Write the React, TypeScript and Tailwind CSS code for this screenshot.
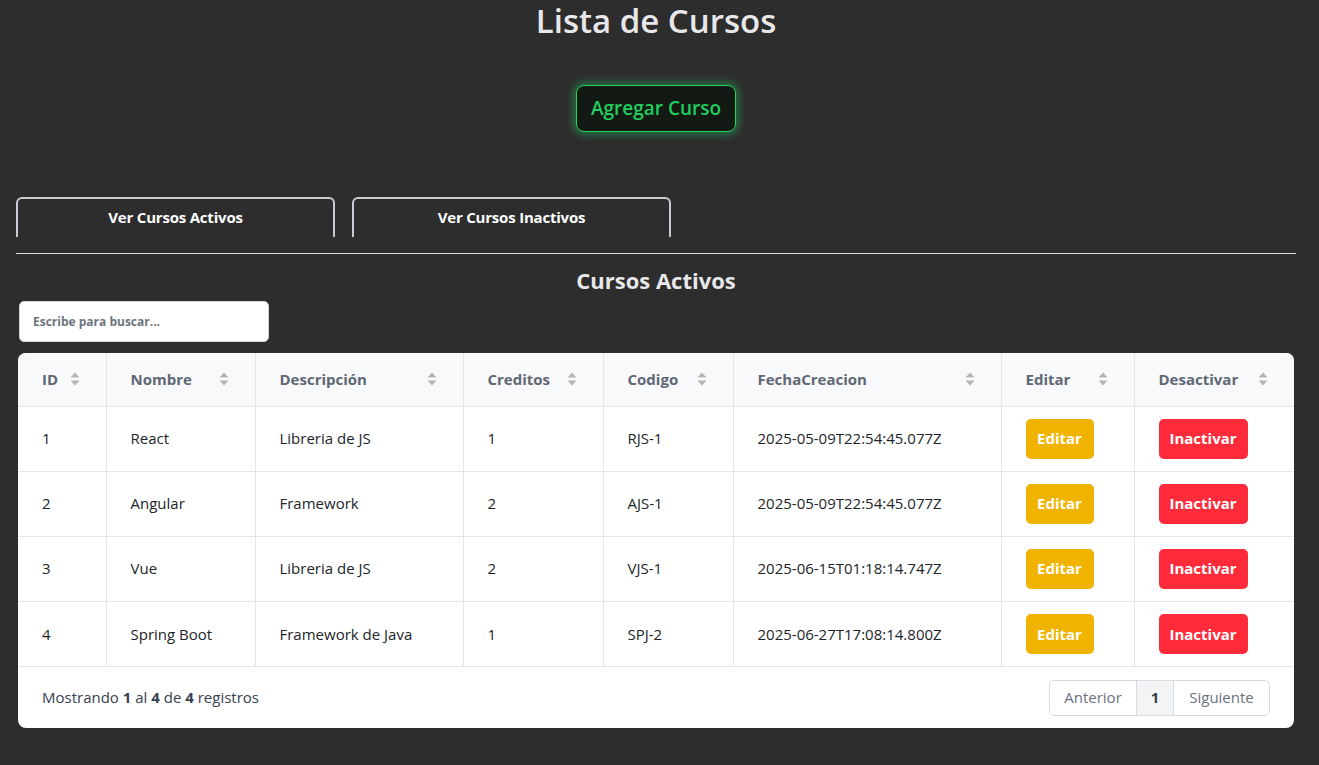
import React from 'react';

const cursos = [
  { id: 1, nombre: 'React', descripcion: 'Libreria de JS', creditos: 1, codigo: 'RJS-1', fecha: '2025-05-09T22:54:45.077Z' },
  { id: 2, nombre: 'Angular', descripcion: 'Framework', creditos: 2, codigo: 'AJS-1', fecha: '2025-05-09T22:54:45.077Z' },
  { id: 3, nombre: 'Vue', descripcion: 'Libreria de JS', creditos: 2, codigo: 'VJS-1', fecha: '2025-06-15T01:18:14.747Z' },
  { id: 4, nombre: 'Spring Boot', descripcion: 'Framework de Java', creditos: 1, codigo: 'SPJ-2', fecha: '2025-06-27T17:08:14.800Z' },
];

const columns = [
  { label: 'ID', width: 88 },
  { label: 'Nombre', width: 149 },
  { label: 'Descripción', width: 208 },
  { label: 'Creditos', width: 140 },
  { label: 'Codigo', width: 130 },
  { label: 'FechaCreacion', width: 268 },
  { label: 'Editar', width: 133 },
  { label: 'Desactivar', width: 160 },
];

function SortIcon() {
  return (
    <svg width="10" height="16" viewBox="0 0 10 16" className="shrink-0">
      <path d="M5 1.5 L9.5 6.5 H0.5 Z" fill="#b5b5b5" />
      <path d="M5 14.5 L9.5 9.5 H0.5 Z" fill="#b5b5b5" />
    </svg>
  );
}

export default function App() {
  const [tab, setTab] = React.useState('activos');

  return (
    <div className="min-h-screen bg-[#2d2d2d] pl-4 pr-[23px] pb-9 pt-[2px]" style={{ fontFamily: '"Open Sans", "Noto Sans", sans-serif' }}>
      <h1 className="text-center text-[33px] font-semibold leading-[38px] text-[#e8e8ea]">Lista de Cursos</h1>

      <div className="mt-[45px] flex justify-center">
        <button className="h-[47px] w-[160px] rounded-[8px] border border-[#22d35a] bg-[#131a13] text-[19px] font-semibold text-[#1fce5e] shadow-[0_0_10px_2px_rgba(34,197,94,0.55)]">
          Agregar Curso
        </button>
      </div>

      <div className="mt-[65px] flex gap-[17px]">
        <button
          onClick={() => setTab('activos')}
          className="h-[40px] w-[319px] rounded-t-[6px] border-2 border-b-0 border-[#c8ccd2] pb-[2px] text-[15px] font-bold tracking-[-0.2px] text-white"
        >
          Ver Cursos Activos
        </button>
        <button
          onClick={() => setTab('inactivos')}
          className="h-[40px] w-[319px] rounded-t-[6px] border-2 border-b-0 border-[#c8ccd2] pb-[2px] text-[15px] font-bold tracking-[-0.2px] text-white"
        >
          Ver Cursos Inactivos
        </button>
      </div>
      <div className="mt-[16px] h-px w-full bg-[#d9d9d9]" />

      <h2 className="mt-[12px] text-center text-[22px] font-bold leading-[28px] text-[#e8e8ea]">
        {tab === 'activos' ? 'Cursos Activos' : 'Cursos Inactivos'}
      </h2>

      <div className="ml-[3px] mt-[7px]">
        <input
          placeholder="Escribe para buscar..."
          className="h-[41px] w-[250px] rounded-[5px] border border-[#d0d4da] bg-white px-[13px] text-[12px] font-bold text-[#333] outline-none placeholder:text-[#6c757d]"
        />
      </div>

      <div className="ml-[2px] mt-[11px] w-[1276px] overflow-hidden rounded-[8px] bg-white">
        <table className="w-full table-fixed border-collapse text-[15px] text-[#212529]">
          <colgroup>
            {columns.map((c) => (
              <col key={c.label} style={{ width: c.width }} />
            ))}
          </colgroup>
          <thead>
            <tr className="h-[53px] bg-[#f8f9fa]">
              {columns.map((c, i) => (
                <th
                  key={c.label}
                  className={`pl-[24px] pr-[26px] text-left font-bold text-[#5f6775] ${i > 0 ? 'border-l border-[#e3e5e8]' : ''}`}
                >
                  <div className="flex items-center justify-between">
                    <span>{c.label}</span>
                    <SortIcon />
                  </div>
                </th>
              ))}
            </tr>
          </thead>
          <tbody>
            {cursos.map((c) => (
              <tr key={c.id} className="h-[65px] border-t border-[#e3e5e8]">
                <td className="pl-[24px]">{c.id}</td>
                <td className="border-l border-[#e3e5e8] pl-[24px]">{c.nombre}</td>
                <td className="border-l border-[#e3e5e8] pl-[24px]">{c.descripcion}</td>
                <td className="border-l border-[#e3e5e8] pl-[24px]">{c.creditos}</td>
                <td className="border-l border-[#e3e5e8] pl-[24px]">{c.codigo}</td>
                <td className="border-l border-[#e3e5e8] pl-[24px]">{c.fecha}</td>
                <td className="border-l border-[#e3e5e8] pl-[24px]">
                  <button className="h-[40px] w-[68px] rounded-[5px] bg-[#f0b400] text-[15px] font-bold text-white">Editar</button>
                </td>
                <td className="border-l border-[#e3e5e8] pl-[24px]">
                  <button className="h-[40px] w-[89px] rounded-[5px] bg-[#ff2a3a] text-[15px] font-bold text-white">Inactivar</button>
                </td>
              </tr>
            ))}
          </tbody>
        </table>

        <div className="flex h-[62px] items-center justify-between border-t border-[#e3e5e8] pl-[24px] pr-[24px]">
          <p className="text-[15px] text-[#374151]">
            Mostrando <b>1</b> al <b>4</b> de <b>4</b> registros
          </p>
          <div className="flex h-[36px] overflow-hidden rounded-[5px] border border-[#d8dce1] text-[15px] text-[#6b7280]">
            <button className="w-[86px]">Anterior</button>
            <button className="w-[38px] border-x border-[#d8dce1] bg-[#f3f4f6] font-bold text-[#374151]">1</button>
            <button className="w-[95px]">Siguiente</button>
          </div>
        </div>
      </div>
    </div>
  );
}
